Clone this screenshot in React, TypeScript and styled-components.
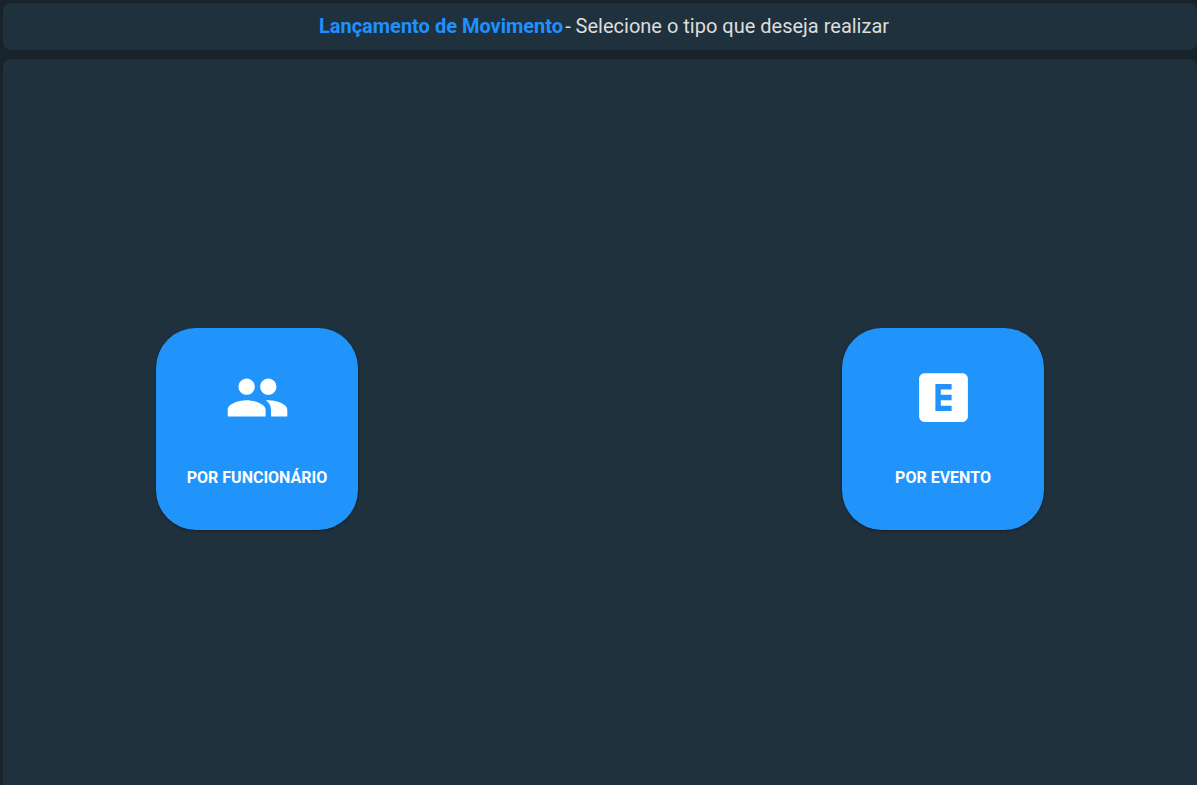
import React from "react";
import styled, { createGlobalStyle } from "styled-components";
import { MdGroup, MdExplicit } from "react-icons/md";

const GlobalStyle = createGlobalStyle`
  * { box-sizing: border-box; }
  body {
    margin: 0;
    background: #19232c;
    font-family: Roboto, "Liberation Sans", sans-serif;
  }
`;

const Page = styled.div`
  display: flex;
  flex-direction: column;
  gap: 9px;
  min-height: 100vh;
  padding: 3px 0 0 3px;
`;

const Header = styled.header`
  display: flex;
  justify-content: center;
  padding: 8px;
  border-radius: 8px;
  background: #20313e;
`;

const Title = styled.h1`
  margin: 0;
  padding-left: 8px;
  font-size: 20px;
  line-height: 31px;
  font-weight: 400;
  color: #ddd;
`;

const Highlight = styled.strong`
  margin-right: 2px;
  font-weight: 700;
  color: #1e90ff;
`;

const Panel = styled.main`
  display: flex;
  flex: 1;
  align-items: center;
  justify-content: space-between;
  padding: 30px 153px 16px;
  border-radius: 8px 8px 0 0;
  background: #20313e;
`;

const OptionButton = styled.button`
  display: flex;
  flex-direction: column;
  align-items: center;
  gap: 36px;
  width: 202px;
  height: 202px;
  padding: 37px 16px 0;
  border: 0;
  border-radius: 40px;
  background: #2094fb;
  box-shadow: 0 1px 3px rgba(0, 0, 0, 0.4);
  color: #fff;
  font-family: inherit;
  font-size: 16px;
  line-height: 24px;
  font-weight: 700;
  text-transform: uppercase;
  cursor: pointer;
`;

export default function App() {
  return (
    <>
      <GlobalStyle />
      <Page>
        <Header>
          <Title>
            <Highlight>Lançamento de Movimento</Highlight>- Selecione o tipo que deseja realizar
          </Title>
        </Header>
        <Panel>
          <OptionButton type="button">
            <MdGroup size={65} aria-hidden />
            Por Funcionário
          </OptionButton>
          <OptionButton type="button">
            <MdExplicit size={65} aria-hidden />
            Por Evento
          </OptionButton>
        </Panel>
      </Page>
    </>
  );
}
